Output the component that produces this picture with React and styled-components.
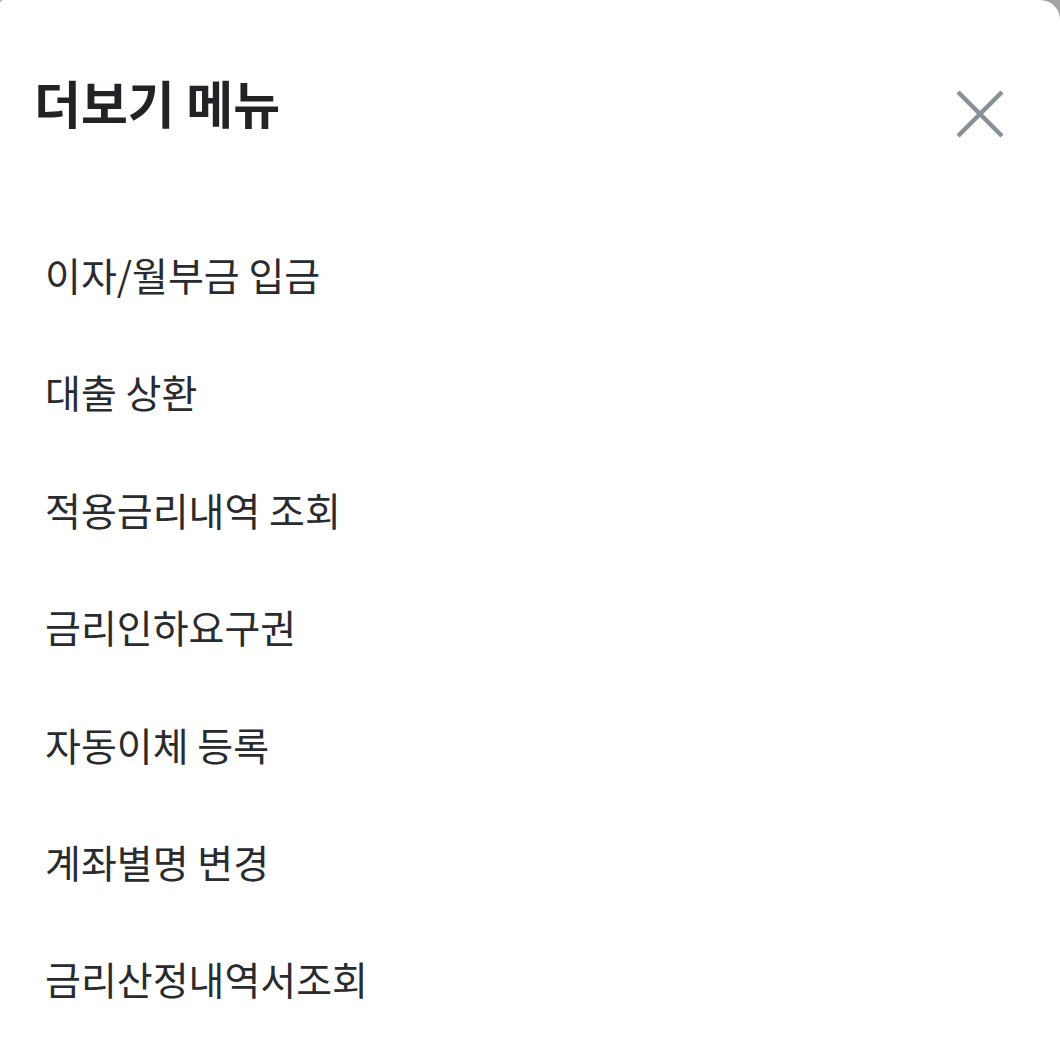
import React from 'react';
import styled, { createGlobalStyle } from 'styled-components';

const menuItems = [
  '이자/월부금 입금',
  '대출 상환',
  '적용금리내역 조회',
  '금리인하요구권',
  '자동이체 등록',
  '계좌별명 변경',
  '금리산정내역서조회',
];

export default function App() {
  return (
    <>
      <GlobalStyle />
      <Sheet>
        <Header>
          <Title>더보기 메뉴</Title>
          <CloseButton aria-label="닫기">
            <svg width="48" height="48" viewBox="0 0 48 48" fill="none">
              <path d="M2 2 L46 46 M46 2 L2 46" stroke="#8a9098" strokeWidth="4.5" />
            </svg>
          </CloseButton>
        </Header>
        <MenuList>
          {menuItems.map((item) => (
            <MenuItem key={item}>{item}</MenuItem>
          ))}
        </MenuList>
      </Sheet>
    </>
  );
}

const GlobalStyle = createGlobalStyle`
  html, body {
    margin: 0;
    background: #a4a4a4;
  }
  body {
    font-family: "Noto Sans CJK KR", "Noto Sans", sans-serif;
    overflow: hidden;
  }
`;

const Sheet = styled.div`
  background: #fff;
  min-height: 100vh;
  border-radius: 4px 20px 0 0;
`;

const Header = styled.div`
  display: flex;
  justify-content: space-between;
  align-items: flex-start;
  padding: 66px 56px 0 34px;
`;

const Title = styled.h1`
  margin: 0;
  font-size: 51px;
  line-height: 72px;
  font-weight: 700;
  color: #222326;
  letter-spacing: 0;
`;

const CloseButton = styled.button`
  border: 0;
  background: none;
  padding: 0;
  margin-top: 24px;
  width: 48px;
  height: 48px;
  cursor: pointer;
  display: flex;
`;

const MenuList = styled.ul`
  list-style: none;
  margin: 78px 0 0;
  padding: 0 0 0 45px;
`;

const MenuItem = styled.li`
  height: 117.4px;
  line-height: 117.4px;
  font-size: 39px;
  font-weight: 400;
  letter-spacing: 0;
  color: #2a2b2e;
`;
